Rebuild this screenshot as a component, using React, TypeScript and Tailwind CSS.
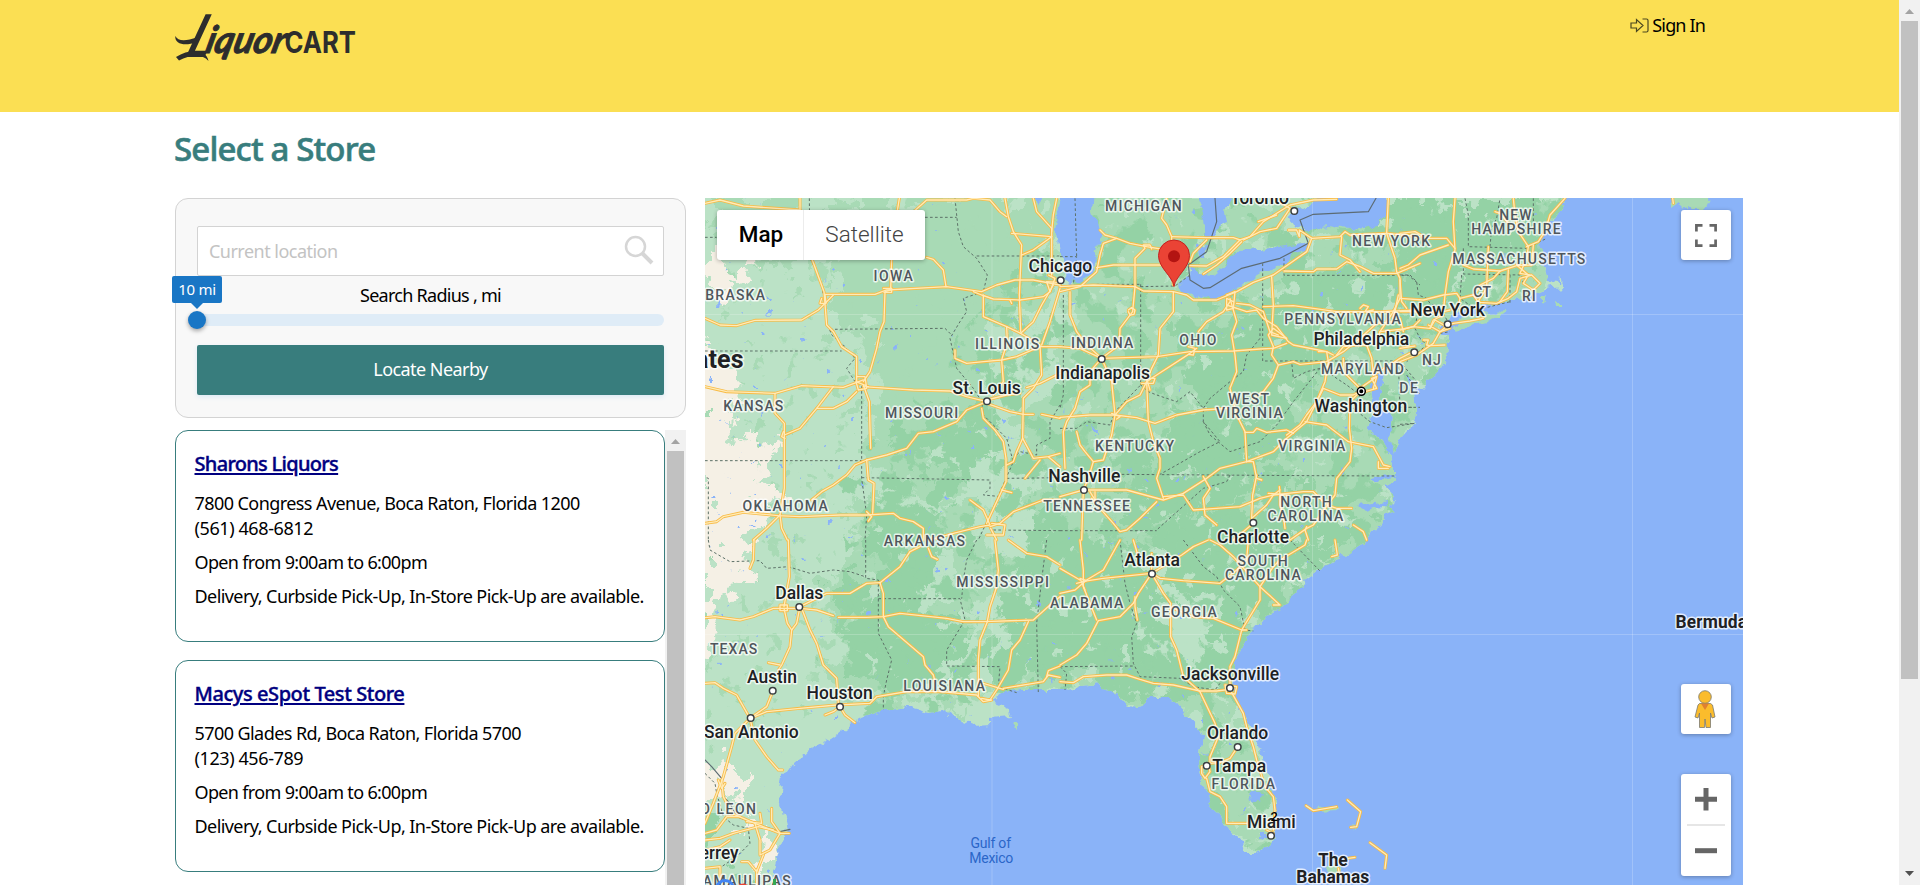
import React from "react";

const TEXT = "font-['Noto_Sans','Open_Sans',sans-serif]";

type Tile = { x: number; y: number; roads: string[]; borders: string[]; frontier?: string[] };

// Map geometry is stored per tile, in triple resolution.
const TILES: Tile[] = [
  {
    x: 700,
    y: 195,
    roads: [
      "15,370 60,390 110,392 165,376 305,375 355,345 400,300",
      "375,298 525,298 560,285 740,275 845,290 890,270 945,255 1000,255 1080,270",
      "15,25 60,15 130,33 300,45",
      "300,10 300,45",
      "335,190 350,230 372,290 380,390 400,410 425,455 470,485 470,560",
      "598,10 590,60 575,190 572,285 555,290 552,380 540,410 530,460 510,530 490,560",
      "630,60 680,15 800,15 820,10 870,15 900,50 920,65",
      "915,10 925,65 940,110 965,150 958,300 962,410",
      "935,115 1055,125",
      "965,180 1000,165 1055,125",
      "1000,10 1010,50 1055,100 1055,240",
      "1070,10 1060,60 1055,110",
      "680,187 700,193 730,225 738,275",
      "820,290 845,300 880,312 960,315 1030,305 1050,290",
      "850,300 850,365 920,395 962,415 1000,380 1025,330 1060,270",
      "930,315 935,325",
      "920,395 922,440 905,495 910,560 880,600",
      "765,465 765,490 800,505 850,500 905,495 950,485 1020,455 1080,455",
      "962,415 1020,450 1025,540 1000,580 970,610 968,730",
      "1080,280 1050,380 1025,450",
      "15,575 80,590 225,595 305,572 430,577 490,555",
      "225,595 225,655 253,685 253,880 240,960",
      "253,720 300,700 350,640 400,575",
      "350,640 400,640 440,620 470,590",
      "490,575 640,585 750,588 800,605 860,620",
      "860,615 920,600 960,595",
      "980,578 1020,565 1080,535",
      "490,570 508,620 510,700 512,760",
      "860,620 800,645 770,680 700,710 655,715 620,760 560,780 500,795 465,810 440,840 400,870 365,890 335,915",
      "500,795 505,855 522,865 518,955",
      "15,985 50,980 70,965 130,952 235,962 300,965 420,960 500,960 580,955 600,970 640,980 670,1000 670,1035",
      "240,960 200,1000 160,1035",
      "240,960 245,1000 262,1035",
      "860,625 930,650 970,658 1000,658",
      "1025,658 1080,670",
      "845,640 850,670 885,705 910,740 918,790 918,860 890,920 860,985",
      "905,885 935,893",
      "968,730 950,770 940,800 920,810",
      "968,730 1000,790 1045,785 1080,775",
      "1020,795 975,850",
      "1045,785 1080,815",
      "810,915 850,945 870,990 840,995 760,1015 690,1035",
      "870,995 900,985 940,950 1030,915 1080,915",
      "872,1000 890,1035",
      "860,1020 910,1020 915,990 875,985",
      "470,545 495,545 500,580 475,585 468,560 505,575",
      "375,298 378,325 360,325 365,310",
      "550,280 575,280 575,292 552,292",
      "250,710 245,725 255,730",
      "500,950 515,965 505,978",
      "1045,240 1065,250 1050,290 1040,260 1075,262",
    ],
    borders: [
      "328,10 330,190 350,230 365,270 375,330 380,380 395,420 430,450 465,490 440,520 465,560 485,575 485,850 500,960 495,1035",
      "15,127 50,127",
      "15,468 425,468",
      "390,403 735,400 755,420",
      "765,10 770,60 775,110 790,155 830,190 862,240 850,290 790,310 800,350 780,380 750,430 770,520 820,580 845,620 850,660 920,730 940,800 905,880 870,960 835,1035",
      "675,67 770,67",
      "830,183 1080,183",
      "15,797 485,797",
      "20,848 25,850 25,1035",
      "485,848 870,855 870,880 850,900 905,905",
      "920,850 1080,848",
      "940,790 960,770 1010,780 1010,750 1050,730 1050,680 1080,630",
      "880,1005 1080,1007",
    ],
  },
  {
    x: 1060,
    y: 195,
    roads: [
      "120,105 135,120 170,130 210,145 260,155 320,165",
      "170,130 130,145 120,180 110,230 60,275 0,290",
      "320,10 305,70 320,90 335,125 335,200 340,270",
      "335,125 440,128 520,128 540,135 570,125 610,80 690,30 760,15 830,13",
      "640,10 690,40 650,100 600,110 550,135",
      "540,135 510,165 490,185 440,213 390,212",
      "430,237 470,210 510,175 545,140",
      "390,200 400,175 440,135",
      "110,218 160,210 300,210 340,205",
      "225,275 225,190 255,160 250,150 270,150 275,162",
      "0,275 100,270 225,275 250,288 340,290 380,300 400,315 470,315 530,290 580,262 640,240 740,170 755,130",
      "755,130 840,125 855,110 870,120 980,115 1080,125",
      "595,80 650,60",
      "685,105 710,105 718,125 718,105 755,130",
      "985,10 980,115 1005,190 1010,230 1020,250 1020,310 1000,350",
      "845,125 840,180 870,195 900,230",
      "672,228 760,230 770,222 830,222 860,200 900,215 940,235 1010,235 1080,205",
      "340,290 340,350 300,400 295,480 275,520 260,560 265,680 280,740 300,790 300,820 290,850 310,910",
      "225,275 218,350 180,400 178,450 125,490",
      "205,345 215,338 225,345 222,358 210,360 205,350",
      "30,290 30,360 50,410 80,450 125,490",
      "0,455 60,460 125,490 290,485 390,470 520,468 600,462 640,460 680,445",
      "125,490 155,560 165,660 155,720 130,795 100,800",
      "100,800 85,850 70,885",
      "125,490 90,530 90,570 60,590 45,640 20,680 10,710 15,820",
      "0,667 90,660 165,660 230,668 285,685 350,660 430,645 500,640",
      "165,660 200,620 240,600 260,560 290,540 390,475 410,460",
      "415,410 440,380 490,350 510,320",
      "510,310 520,345 530,380 515,420 525,480 530,530 510,580 530,660 555,710 560,800",
      "500,300 525,290 520,340 500,345 500,310 520,320",
      "500,330 560,350 590,345 610,370 650,395 685,440 700,450 760,462 800,470 820,480",
      "530,325 570,330 610,350 630,410 655,420",
      "610,335 700,332 760,340 830,350 890,350 960,350 1080,345",
      "635,245 640,330 635,420 680,430 640,400 625,420 640,455",
      "640,455 635,480 655,510 640,550 610,590 580,610",
      "655,510 700,500 720,508 800,500 850,470 900,430 950,385 1000,380",
      "960,410 1030,402 1060,395 1080,375",
      "775,470 800,470 805,500 795,560 770,620 740,660 720,690 680,720",
      "830,480 850,455 890,450 920,450 935,490 940,540",
      "850,490 850,530 900,580 950,545",
      "940,540 990,510 1020,490 1060,470",
      "790,580 840,600 880,600 900,590",
      "900,590 870,620 868,700 875,760 870,800 830,850 825,900 810,920",
      "915,590 950,580 935,550 950,545 940,580",
      "735,680 800,690 865,740 940,755 970,810 990,815",
      "955,800 955,820 985,820",
      "560,800 480,820 440,850 370,895 310,915 200,885 120,885 70,885 0,905",
      "560,800 600,785 640,770 680,730 740,680 790,580",
      "555,712 580,712 590,700 620,712 680,705 700,715",
      "560,800 580,800 590,850 605,855",
      "590,840 578,900 575,970",
      "430,845 450,880 430,910 435,960 470,990",
      "310,905 370,900 400,945 470,940 540,935 600,910 640,900 730,890 760,890 800,930 830,940 875,940",
      "575,970 620,930 640,900 660,885",
      "658,875 660,900 660,930 670,960 675,1000",
      "625,895 680,900",
      "580,985 520,1035",
      "70,885 65,1035",
      "90,890 120,940 160,985 180,1010 200,1005 240,970 290,920",
      "105,890 105,920 95,910",
      "50,710 60,750 75,770 100,800",
      "810,920 760,990 740,1000 690,1035",
      "880,990 910,1010 920,1035",
      "740,995 735,1005 745,1035",
      "245,565 280,565 285,550 260,550 270,585",
      "155,655 180,665 170,672",
      "385,455 405,460 400,480 385,478",
      "900,340 910,330 925,335 915,350 940,345",
      "0,270 0,250",
      "1000,350 960,410 955,430",
      "1005,350 1015,300 1000,370",
    ],
    borders: [
      "242,268 242,570 265,590 290,600 350,620 390,590 430,640 430,680 480,740 420,770 350,810 300,838",
      "110,268 242,268",
      "242,275 345,273 390,240",
      "0,185 50,185 40,268",
      "45,10 50,185",
      "10,300 10,600 0,640",
      "608,205 608,498 1020,498 1045,530 1070,560",
      "672,190 672,241 1045,241 1080,270",
      "600,400 600,430 560,480 550,530 510,560 450,610 430,640",
      "430,680 450,720 510,770 600,740 650,690 700,620 780,520",
      "780,520 740,530 700,550 695,500",
      "170,838 740,842 1010,843",
      "510,840 500,860 430,880 340,960 290,1005",
      "0,1007 290,1007",
      "0,700 50,700 80,680 150,690 165,650 242,570",
      "800,530 860,570 900,600 880,640 930,680 980,698 1065,685",
      "1015,500 1020,637 1060,637",
    ],
    frontier: [
      "465,10 470,80 440,170 385,210 390,255 430,280 450,278 545,220 660,190 745,145 720,75 760,58 925,50 948,10",
    ],
  },
  {
    x: 1400,
    y: 195,
    roads: [
      "165,10 160,80 165,165 145,230 135,300 130,350",
      "0,115 45,110 80,130 140,130 165,160",
      "0,220 25,210 60,180 145,150",
      "495,10 450,60 435,110 415,140 380,155",
      "340,10 345,60 355,110 385,155 380,190 360,235 390,240",
      "285,50 300,55 330,90",
      "265,155 262,225 260,280 240,310 235,320",
      "190,210 220,222 262,225 300,228 350,212 395,210 400,150",
      "300,228 280,250 240,270 230,290",
      "180,310 220,300 235,322 290,325 325,310 350,290 360,250 395,240 420,265 400,285 370,265 385,240 350,210",
      "325,225 322,290 300,320",
      "0,310 70,315 130,300 170,295 180,310 175,340",
      "0,350 60,350 130,350 150,345",
      "0,405 40,395 90,400 100,375 130,360",
      "145,390 160,385 210,378 250,370",
      "145,390 120,410 100,445 50,480 0,500",
      "45,453 0,460",
      "70,435 85,435 80,450 90,452 135,450",
      "0,255 5,320 20,340",
      "90,400 105,375 150,400 120,410 85,390",
      "818,10 820,25",
      "0,370 10,410",
    ],
    borders: [
      "195,10 205,60 205,155 380,160 420,140 440,130",
      "270,155 275,100 290,70 300,10",
      "400,10 400,100",
      "190,160 190,237 365,240 370,270",
      "330,240 330,330",
      "0,240 30,240 50,260 55,300 80,310 90,325 120,340 150,390",
      "50,370 45,400 60,430 80,450 20,500",
      "185,240 180,310 230,345 330,320",
      "0,688 45,685",
      "25,637 60,637",
      "20,540 60,600",
      "120,415 150,410",
    ],
  },
  {
    x: 700,
    y: 540,
    roads: [
      "15,233 45,230 120,240 160,230 220,205 300,205 350,210 400,227",
      "415,232 500,232 550,230 600,220 740,235 790,245 850,245 1000,240 1050,195 1080,170",
      "162,0 160,60 150,85",
      "265,0 268,110 252,200",
      "300,200 290,250 275,270 270,320 245,375 235,390",
      "252,205 262,250 275,270",
      "205,368 240,375",
      "305,205 330,270 350,310 370,375 410,415 415,490",
      "300,200 380,160 450,160 500,130 540,128",
      "540,128 600,80 630,35 660,20",
      "685,25 695,50 712,58",
      "540,128 550,160 550,230 565,260 600,290 670,350 675,375 700,405 705,425",
      "885,0 895,90 890,140 870,200 862,245 840,300 835,360 835,470",
      "925,0 980,40 1040,50 1080,75",
      "985,245 960,300 935,330 925,390 890,450 870,480 845,475",
      "910,445 1000,430 1030,425 1045,405 1080,412",
      "1080,378 1045,392 1040,410",
      "150,535 200,515 300,505 410,495 510,490 530,470 560,465 620,455 720,455",
      "850,430 910,448",
      "720,455 830,465 850,485 875,480",
      "218,455 200,500 150,535",
      "15,430 45,428 70,445 110,465 130,500 150,535 105,580 95,620 70,710 40,790 15,850",
      "150,535 165,600 200,650 235,690 248,690",
      "420,500 435,525 465,548",
      "375,525 400,515 420,500",
      "65,720 70,770 95,820 165,850 240,880 268,880",
      "165,850 180,900 180,945 210,930 240,880",
      "215,805 215,845 240,880",
      "180,820 185,850 140,845",
      "15,900 60,895 100,880 175,860 220,870",
      "15,880 50,870 80,830 120,830",
      "125,965 145,965 170,995 190,945",
      "170,990 170,1035",
      "15,985 60,980 60,1020",
      "20,930 60,920 90,900",
      "240,195 262,195 262,212 240,212 240,195",
      "55,720 65,745 75,730",
    ],
    borders: [
      "25,0 30,30 90,65 180,62 200,85 265,80 330,100 400,90 450,95 495,110",
      "497,0 497,115 535,120 535,280 575,360 560,420 550,470 550,510",
      "535,176 780,176 795,240 740,330 740,378 900,380 895,440 950,458",
      "830,0 800,60 790,120 785,176",
      "1040,0 1025,120 1010,250 1015,460",
      "15,700 45,730 50,760 70,830 100,855 145,865 150,910 110,950 50,990",
    ],
    frontier: ["15,660 35,680 65,715 70,770 90,790 110,830 170,852 240,875 270,868"],
  },
  {
    x: 1060,
    y: 540,
    roads: [
      "60,0 70,90 70,140 110,240",
      "0,160 45,150 80,120 130,90 180,0",
      "0,85 60,120",
      "50,130 80,122 60,115 75,150",
      "65,125 130,115 275,100",
      "275,100 365,45 400,20 445,0",
      "220,0 235,50",
      "275,40 275,100",
      "275,100 300,115 370,122 480,130 530,90 560,60 565,0",
      "275,100 235,160 220,190 180,230 115,242 80,310 50,345 0,375",
      "225,170 225,200 232,240",
      "275,100 310,160 332,190 332,290 350,330 370,410 420,455 465,550 475,590 450,650 450,670",
      "340,205 400,230 460,235 545,270 560,270",
      "450,0 480,15 520,50 600,140 660,195 640,195",
      "740,0 735,15 660,60 640,80 600,140 600,180 545,270 525,350 510,380 510,445",
      "825,0 832,45 815,50",
      "0,425 40,428 70,410 140,405 200,405 240,418 280,430 340,435 420,453 470,453 510,448",
      "510,448 550,520 560,560 580,620 590,660 615,740 640,770 645,810 640,870",
      "530,625 510,655 480,668 450,670 425,680 425,700 435,715 450,695 445,670",
      "440,715 450,755 480,770 500,800 500,850 560,850",
      "738,797 760,812 830,800",
      "862,780 902,815 890,860 872,862",
      "930,908 980,945 975,985",
      "865,955 885,952",
      "835,985 840,1010",
      "620,870 640,880 625,885",
      "495,435 530,440 525,462 500,460 495,435",
    ],
    borders: [
      "180,0 195,130 210,190 230,250 215,290 220,370 240,410 360,415 400,440 465,450 480,430",
      "0,380 225,378",
      "370,0 430,80 470,110 490,150 540,200 555,270 580,273",
      "690,0 780,93",
      "0,380 20,400 15,450",
    ],
  },
];

const LAND =
  "695,190 1566,190 1562,205 1552,220 1545,228 1540,242 1542,258 1545,272 1547,283 1560,284 1561,275 1564,287 1552,288 1542,290 1535,293 1520,300 1500,302 1480,307 1460,311 1448,318 1440,333 1448,338 1447,355 1442,368 1428,383 1422,390 1414,383 1405,373 1408,382 1415,395 1417,408 1415,423 1400,440 1393,453 1390,438 1394,420 1384,408 1378,395 1384,377 1377,372 1372,384 1370,397 1374,412 1367,428 1383,440 1388,452 1393,463 1393,482 1385,486 1398,500 1388,506 1396,510 1384,515 1380,526 1373,532 1367,541 1350,552 1337,560 1320,570 1302,583 1298,593 1282,607 1262,619 1250,632 1242,647 1235,667 1232,687 1240,707 1250,727 1260,747 1267,773 1277,800 1277,823 1270,847 1257,853 1245,853 1243,842 1230,833 1220,817 1208,797 1202,780 1198,763 1203,740 1198,727 1183,713 1170,697 1150,697 1141,706 1128,708 1117,695 1100,685 1080,687 1060,690 1047,690 1020,690 1003,693 990,700 1007,707 1012,716 990,718 990,724 973,725 960,720 945,710 930,713 907,707 883,710 860,718 843,730 830,740 807,752 793,763 783,777 780,800 788,830 778,853 773,873 773,895 695,895";

const WATER = [
  "1062,190 1058,215 1055,230 1059,252 1062,272 1070,284 1085,279 1092,268 1098,252 1102,235 1096,222 1092,210 1095,190",
  "1033,190 1036,208 1043,190",
  "1195,190 1202,207 1204,220 1206,238 1213,237 1220,225 1227,222 1225,210 1237,190",
  "1198,245 1208,244 1206,256 1199,258",
  "1307,242 1285,246 1258,250 1237,251 1225,265 1213,274 1200,273 1190,264 1188,276 1179,286 1190,295 1205,299 1222,295 1240,287 1263,273 1285,262 1297,252 1309,247",
  "1288,218 1299,208 1312,202 1325,190 1386,190 1388,210 1379,224 1350,229 1328,225 1308,230 1293,226",
  "1248,795 1256,791 1260,797 1253,803 1247,799",
  "1372,478 1392,474 1392,478 1376,482",
  "1360,506 1388,500 1388,504 1366,511",
];

const ISLANDS = [
  "1452,326 1470,315 1490,312 1508,311 1500,317 1487,322 1470,326 1456,330",
  "1555,302 1563,302 1563,304 1556,304",
  "1541,296 1548,296 1546,301 1541,300",
  "1672,190 1673,208 1680,203 1690,210 1704,210 1714,190",
  "1316,808 1336,806 1338,810 1318,811",
  "1352,823 1357,829 1354,831",
  "1326,866 1340,866 1342,876 1330,877",
  "1015,722 1018,722 1018,731 1014,727",
];

const MID = [
  "860,198 1062,198 1058,215 1055,290 1000,330 970,400 900,390 880,340 830,300 820,230",
  "880,330 1000,320 980,400 990,470 930,500 880,470 860,420",
  "705,198 800,198 820,240 790,270 720,240",
  "1090,198 1205,198 1210,260 1180,290 1170,500 1040,540 1000,460 1060,360 1065,290",
  "1200,260 1400,230 1420,300 1410,450 1380,560 1290,600 1240,660 1240,720 1280,850 1200,830 1190,740 1100,690 990,700 880,710 840,690 830,600 860,500 1020,500",
  "1300,198 1600,198 1540,320 1440,390 1400,340",
  "1230,198 1310,198 1270,245 1215,265",
];

const DARK = [
  "925,430 945,412 985,420 992,445 985,475 955,485 930,465 905,462 890,450",
  "870,505 935,500 950,540 945,590 905,610 890,560 870,550",
  "845,590 880,560 940,580 935,620 990,640 1080,600 1130,560 1180,520 1230,500 1240,560 1200,600 1140,650 1090,680 1010,680 930,690 880,690 840,650",
  "1010,520 1060,500 1080,560 1080,640 1010,650 1000,590",
  "1150,440 1200,400 1225,330 1290,300 1330,330 1300,400 1270,470 1200,510 1140,530 1110,500",
  "1265,290 1320,265 1400,275 1450,230 1450,300 1400,320 1330,340 1290,350 1260,330",
  "1370,198 1545,198 1535,240 1480,300 1440,310 1400,260 1360,230",
  "1180,340 1260,310 1280,380 1230,420 1190,390",
  "1060,560 1150,540 1300,545 1330,555 1260,620 1235,690 1190,710 1110,690 1060,650",
  "1230,490 1330,480 1370,500 1340,550 1280,540",
  "705,820 715,820 720,840 706,845",
  "722,870 760,862 765,885 725,885",
];

const PALE = [
  "1150,620 1200,590 1225,600 1215,660 1180,670 1150,650",
  "1140,560 1200,590 1180,600 1150,590",
  "1190,690 1215,700 1210,720 1190,710",
  "945,540 960,580 940,620 925,560",
  "985,460 1030,450 1040,520 1000,560 975,545",
  "1210,840 1240,845 1270,845 1262,853 1245,853",
  "990,600 1010,560 1015,610 985,680 960,700 950,680",
];

const DRY = [
  "705,245 735,252 745,275 712,290 705,275",
  "700,340 720,350 728,380 738,400 718,420 740,440 770,442 775,462 750,470 770,485 790,495 760,515 745,530 760,560 745,570 725,590 720,640 700,665",
  "700,750 722,765 735,765 740,790 758,785 752,805 728,805 720,790 700,800",
  "757,825 775,835 775,880 758,870",
  "728,815 745,818 745,826 730,826",
];

type Label = [string, number, number, number];

const STATES: Label[] = [
  ["MICHIGAN", 1105.7, 1181.7, 210.7],
  ["IOWA", 874.3, 912.7, 281],
  ["BRASKA", 706, 765, 300.3],
  ["KANSAS", 724, 783.3, 411],
  ["MISSOURI", 885.7, 958.3, 418],
  ["ILLINOIS", 975.7, 1039.3, 348.7],
  ["OKLAHOMA", 743.3, 827.7, 511],
  ["ARKANSAS", 884.5, 965, 545.7],
  ["MISSISSIPPI", 957, 1049, 587],
  ["LOUISIANA", 904, 985, 691.3],
  ["TEXAS", 710.7, 757.3, 654.3],
  ["O LEON", 701, 756, 814.3],
  ["AMAULIPAS", 703.5, 790.7, 886],
  ["INDIANA", 1071.7, 1133.3, 348],
  ["OHIO", 1180, 1216.3, 345],
  ["PENNSYLVANIA", 1285, 1400.7, 324.3],
  ["NEW YORK", 1352.7, 1430, 245.7],
  ["MARYLAND", 1321.7, 1404, 374.3],
  ["DE", 1400, 1418, 393],
  ["WEST", 1229, 1269, 404],
  ["VIRGINIA", 1216.7, 1282.7, 418],
  ["KENTUCKY", 1095.7, 1174, 450.7],
  ["VIRGINIA", 1279, 1345.3, 450.7],
  ["TENNESSEE", 1044, 1130, 511.3],
  ["NORTH", 1281, 1331.7, 507.3],
  ["CAROLINA", 1268.3, 1343.3, 521.3],
  ["SOUTH", 1238.3, 1287.7, 566.3],
  ["CAROLINA", 1225.7, 1300.7, 580.3],
  ["ALABAMA", 1050.7, 1123.3, 608],
  ["GEORGIA", 1151.7, 1216.7, 617.3],
  ["FLORIDA", 1212.3, 1275, 788.7],
  ["NEW", 1500, 1531.7, 220],
  ["HAMPSHIRE", 1472, 1560.7, 234],
  ["MASSACHUSETTS", 1453, 1585.3, 264.3],
  ["CT", 1474, 1491, 296.7],
  ["RI", 1522.7, 1535.7, 301],
  ["NJ", 1422.7, 1440.7, 365],
];

const CITIES: Label[] = [
  ["Chicago", 1029.3, 1092.3, 272.3],
  ["Toronto", 1231, 1289, 203.5],
  ["New York", 1411, 1485, 316.3],
  ["Philadelphia", 1314.3, 1409.3, 345],
  ["Washington", 1315.3, 1407.3, 411.7],
  ["Indianapolis", 1056, 1150, 379.3],
  ["St. Louis", 953.3, 1020.7, 393.7],
  ["Nashville", 1049, 1120.3, 482.3],
  ["Charlotte", 1217.7, 1289, 542.5],
  ["Atlanta", 1125, 1180, 566],
  ["Dallas", 776, 823.3, 599],
  ["Austin", 747.7, 797, 682.7],
  ["Houston", 807.3, 872.7, 699.3],
  ["San Antonio", 704.7, 798.7, 737.7],
  ["errey", 700.5, 738.7, 858.7],
  ["Jacksonville", 1182, 1279, 680.3],
  ["Orlando", 1207.7, 1268.3, 739],
  ["Tampa", 1213, 1266.3, 771.7],
  ["Miami", 1247.7, 1295.7, 828],
];

const COUNTRIES: Label[] = [
  ["The", 1319, 1347.7, 865.7],
  ["Bahamas", 1297, 1369.3, 883.3],
  ["Bermuda", 1676.3, 1747, 628],
];

const DOTS = [
  [1060.7, 280.3], [1294.3, 211], [1447.7, 324.3], [1414.3, 352.3], [1101.7, 359], [987, 401.3], [1084, 490],
  [1253.3, 522.7], [1152, 573.7], [799.3, 607], [772.7, 690.7], [840, 706.7], [750.7, 718], [1230, 688],
  [1237.7, 747], [1206.7, 765.7], [1271, 835.7],
];

function MapText({ items, className }: { items: Label[]; className: string }) {
  return (
    <g className={className}>
      {items.map(([t, a, b, y]) => (
        <text key={t + a} x={a - 0.7} y={y} textLength={b - a + 0.7}>
          {t}
        </text>
      ))}
    </g>
  );
}

function Shapes({ list, className, filter }: { list: string[]; className: string; filter?: string }) {
  return (
    <g className={className} filter={filter}>
      {list.map((p) => (
        <polygon key={p} points={p} />
      ))}
    </g>
  );
}

function Lines({ pick, className }: { pick: (t: Tile) => string[]; className: string }) {
  return (
    <g className={className} fill="none" strokeLinejoin="round" strokeLinecap="round">
      {TILES.map((t) => (
        <g key={t.x + "-" + t.y} transform={`translate(${t.x} ${t.y}) scale(0.33333)`}>
          {pick(t).map((p, i) => (
            <polyline key={i} points={p} />
          ))}
        </g>
      ))}
    </g>
  );
}

function MapCanvas() {
  return (
    <svg className="block h-full w-full" viewBox="705 198 1038 687">
      <defs>
        <clipPath id="land">
          <polygon points={LAND} />
        </clipPath>
        <filter id="coast" filterUnits="userSpaceOnUse" x="690" y="180" width="1070" height="720">
          <feTurbulence type="fractalNoise" baseFrequency="0.09" numOctaves="3" seed="4" />
          <feDisplacementMap in="SourceGraphic" scale="11" xChannelSelector="R" yChannelSelector="G" />
        </filter>
        <filter id="rough" filterUnits="userSpaceOnUse" x="690" y="180" width="1070" height="720">
          <feTurbulence type="fractalNoise" baseFrequency="0.035" numOctaves="4" seed="9" />
          <feDisplacementMap in="SourceGraphic" scale="75" xChannelSelector="R" yChannelSelector="G" />
        </filter>
        <filter id="patches" filterUnits="userSpaceOnUse" x="690" y="180" width="1070" height="720" colorInterpolationFilters="sRGB">
          <feTurbulence type="fractalNoise" baseFrequency="0.04" numOctaves="4" seed="21" />
          <feColorMatrix values="0 0 0 0 0  0 0 0 0 0  0 0 0 0 0  22 0 0 0 -12" result="mask" />
          <feComposite in="SourceGraphic" in2="mask" operator="in" />
        </filter>
        <filter id="flecks" filterUnits="userSpaceOnUse" x="690" y="180" width="1070" height="720" colorInterpolationFilters="sRGB">
          <feTurbulence type="fractalNoise" baseFrequency="0.06" numOctaves="3" seed="33" />
          <feColorMatrix values="0 0 0 0 0  0 0 0 0 0  0 0 0 0 0  0 26 0 0 -16.9" result="mask" />
          <feComposite in="SourceGraphic" in2="mask" operator="in" />
        </filter>
        <filter id="ponds" filterUnits="userSpaceOnUse" x="690" y="180" width="1070" height="720" colorInterpolationFilters="sRGB">
          <feTurbulence type="fractalNoise" baseFrequency="0.12" numOctaves="2" seed="7" />
          <feColorMatrix values="0 0 0 0 0  0 0 0 0 0  0 0 0 0 0  0 0 26 0 -20.2" result="mask" />
          <feComposite in="SourceGraphic" in2="mask" operator="in" />
        </filter>
      </defs>
      <rect x="700" y="190" width="1050" height="700" className="fill-[#8ab3f8]" />
      <g filter="url(#coast)">
        <polygon points={LAND} className="fill-[#bbe2c6]" />
        <g clipPath="url(#land)">
          <Shapes list={MID} className="fill-[#a8dab5]" filter="url(#rough)" />
          <Shapes list={DARK} className="fill-[#94d2a5]" filter="url(#rough)" />
          <Shapes list={PALE} className="fill-[#bbe2c6]" filter="url(#rough)" />
          <Shapes list={["705,190 1100,190 1000,500 850,700 705,760"]} className="fill-[#a8dab5]" filter="url(#flecks)" />
          <Shapes list={["1030,190 1580,190 1400,560 1280,850 1190,850 1180,700 860,720 840,480 1030,420"]} className="fill-[#bbe2c6]" filter="url(#flecks)" />
          <Shapes list={["1080,190 1580,190 1400,560 1280,850 1190,850 1180,700 860,720 840,480"]} className="fill-[#94d2a5]" filter="url(#patches)" />
          <Shapes list={DRY} className="fill-[#f5f0e5]" filter="url(#rough)" />
          <Shapes list={["705,190 1580,190 1400,560 1280,850 705,885"]} className="fill-[#8ab3f8]" filter="url(#ponds)" />
        </g>
        <Shapes list={WATER} className="fill-[#8ab3f8]" />
        <Shapes list={ISLANDS} className="fill-[#a8dab5]" />
      </g>
      <path d="M992 190V890M1312.500 190V890M1632.500 190V890M700 314.500H1750M700 634.500H1750" className="stroke-white/20" fill="none" />
      <Lines pick={(t) => t.borders} className="stroke-[#5c7067] stroke-[3px] [stroke-dasharray:8_7] [stroke-linecap:butt]" />
      <Lines pick={(t) => t.frontier ?? []} className="stroke-[#5c6b73] stroke-[3.500px]" />
      <Lines pick={(t) => t.roads} className="stroke-[#f8bb45] stroke-[9px]" />
      <Lines pick={(t) => t.roads} className="stroke-[#ffebb8] stroke-[4px]" />
      <MapText
        items={STATES}
        className="fill-[#4f565c] stroke-white/75 stroke-[3px] font-['Roboto',sans-serif] text-[14px] font-medium [paint-order:stroke] [stroke-linejoin:round]"
      />
      <g className="fill-white stroke-[#3c4043] stroke-[1.500px]">
        {DOTS.map(([x, y]) => (
          <circle key={x} cx={x} cy={y} r="3.300" />
        ))}
        <circle cx="1361.300" cy="391.300" r="4" className="stroke-black" />
        <circle cx="1361.300" cy="391.300" r="1.300" className="fill-black stroke-black" />
      </g>
      <MapText
        items={CITIES}
        className="fill-[#202124] stroke-white/75 stroke-[3px] font-['Roboto',sans-serif] text-[17.500px] font-medium [paint-order:stroke] [stroke-linejoin:round]"
      />
      <MapText
        items={COUNTRIES}
        className="fill-[#202124] stroke-white/75 stroke-[3px] font-['Roboto',sans-serif] text-[17.500px] font-bold [paint-order:stroke] [stroke-linejoin:round]"
      />
      <text x="695" y="367.700" textLength="48.500" className="fill-[#202124] stroke-white/75 stroke-[3px] font-['Roboto',sans-serif] text-[25px] font-bold [paint-order:stroke]">
        ates
      </text>
      <g className="fill-[#2a66c8] font-['Roboto',sans-serif] text-[14px]">
        <text x="970.500" y="848" textLength="40.500">Gulf of</text>
        <text x="969.300" y="862.700" textLength="44">Mexico</text>
      </g>
      <text x="1270.500" y="820.700" className="fill-black font-['Roboto',sans-serif] text-[13px] font-medium">2</text>
      <g fill="none" strokeWidth="3">
        <circle cx="725" cy="889" r="8.500" className="stroke-[#4285f4]" />
        <circle cx="743" cy="892" r="7" className="stroke-[#ea4335]" />
        <path d="M774.500 879V890" className="stroke-[#34a853]" />
      </g>
      <path
        d="M1174 286.500C1172.500 276 1158.500 268 1158.500 255.500A15.500 15.500 0 0 1 1189.500 255.500C1189.500 268 1175.500 276 1174 286.500Z"
        className="fill-[#ea4335] stroke-[#c5221f]"
      />
      <circle cx="1174" cy="256.300" r="6" className="fill-[#b31412]" />
    </svg>
  );
}

function Arrow({ down = false, dark = false }: { down?: boolean; dark?: boolean }) {
  return (
    <svg viewBox="0 0 9 5" className={`h-[5px] w-[9px] ${down ? "rotate-180" : ""} ${dark ? "fill-[#505050]" : "fill-[#a3a3a3]"}`}>
      <path d="M4.500 0L9 5H0Z" />
    </svg>
  );
}

function Logo() {
  return (
    <svg viewBox="172 8 190 66" className="h-[66px] w-[190px] overflow-visible fill-[#2d2d2d]" role="img" aria-label="LiquorCART">
      <g transform="translate(184 57) skewX(-20)">
        <text x="0" y="0" className="font-['Lato',sans-serif] text-[59px] font-bold italic" textLength="23" lengthAdjust="spacingAndGlyphs">
          L
        </text>
      </g>
      <g transform="translate(204 53) skewX(-14)">
        <text
          x="0"
          y="0"
          className="stroke-[#2d2d2d] stroke-[1px] font-['Lato',sans-serif] text-[38px] font-bold italic"
          textLength="79"
          lengthAdjust="spacingAndGlyphs"
        >
          iquor
        </text>
      </g>
      <path d="M175.300 36C178 41.500 186 41 197 37.500L196 42.500C185 46 174.500 44.500 175.300 36Z" />
      <path d="M176 57C189 49 206 48 208.500 61C202 53.500 190 55 179 60.500Z" />
      <text x="284.500" y="53.300" textLength="71.500" lengthAdjust="spacingAndGlyphs" className="font-['Inter',sans-serif] text-[30px] font-bold">
        CART
      </text>
    </svg>
  );
}

type Store = { name: string; address: string; phone: string; spacing: string };

const STORES: Store[] = [
  { name: "Sharons Liquors", address: "7800 Congress Avenue, Boca Raton, Florida 1200", phone: "(561) 468-6812", spacing: "tracking-[-0.7px]" },
  { name: "Macys eSpot Test Store", address: "5700 Glades Rd, Boca Raton, Florida 5700", phone: "(123) 456-789", spacing: "tracking-[-0.43px]" },
];

function StoreCard({ store }: { store: Store }) {
  return (
    <article className="h-[212px] w-[490px] shrink-0 rounded-[13px] border border-[#387d7d] bg-white pt-[18px] pl-[18.5px] whitespace-nowrap">
      <h2
        className={`text-[20px] leading-[30px] font-medium text-[#000080] underline decoration-2 underline-offset-[2px] [-webkit-text-stroke:0.4px_#000080] ${store.spacing}`}
      >
        {store.name}
      </h2>
      <p className="mt-[12px] text-[18px] leading-[25px] tracking-[-0.57px]">
        {store.address}
        <br />
        <span className="tracking-[-0.4px]">{store.phone}</span>
      </p>
      <p className="mt-[9px] text-[18px] leading-[25px] tracking-[-0.66px]">Open from 9:00am to 6:00pm</p>
      <p className="mt-[9px] text-[18px] leading-[25px] tracking-[-0.57px]">Delivery, Curbside Pick-Up, In-Store Pick-Up are available.</p>
    </article>
  );
}

function SearchPanel() {
  return (
    <section className="flex h-[220px] flex-col rounded-[13px] border border-[#d3d3d3] bg-[#f8f8f8] px-[21px] pt-[27px]">
      <div className="flex h-[50px] shrink-0 items-center justify-between rounded-[2px] border border-[#d3d3d3] bg-white pr-[9px] pl-[11px]">
        <span className="text-[18px] tracking-[-0.52px] text-[#c3c3c3]">Current location</span>
        <svg viewBox="0 0 30 30" className="mb-[2px] h-[30px] w-[30px] fill-none stroke-[#d6d6d6]">
          <circle cx="11.500" cy="11.500" r="9.500" strokeWidth="2.500" />
          <path d="M18 18L28 28" strokeWidth="4" />
        </svg>
      </div>
      <p className="mt-[7px] text-center text-[18px] leading-[25px] tracking-[-0.73px]">Search Radius , mi</p>
      <div className="relative mt-[6px] h-[12px] shrink-0 rounded-full bg-[#dfecf7]">
        <div className="absolute -top-[3px] -left-[9px] h-[18px] w-[18px] rounded-full bg-[#1976c5] shadow-[0_2px_4px_rgba(0,0,0,0.35)]" />
        <div className="absolute -top-[38px] -left-[25px] flex h-[27px] w-[50px] items-center justify-center rounded-[2px] bg-[#1976c5] text-[15px] tracking-[-0.3px] text-white">
          10 mi
        </div>
        <svg viewBox="0 0 12 6" className="absolute -top-[11px] -left-[6px] h-[6px] w-[12px] fill-[#1976c5]">
          <path d="M0 0H12L6 6Z" />
        </svg>
      </div>
      <button className="mt-[19px] h-[50px] shrink-0 rounded-[2px] bg-[#387d7d] pb-[2px] text-[18px] tracking-[-0.55px] text-white shadow-[0_2px_5px_#dceaf5]">
        Locate Nearby
      </button>
    </section>
  );
}

function MapPanel() {
  return (
    <section className="relative h-[687px] w-[1038px] shrink-0 overflow-hidden">
      <MapCanvas />
      <div className="absolute top-[12px] left-[12px] flex h-[50px] rounded-[3px] bg-white font-['Roboto',sans-serif] text-[22.500px] shadow-[0_1px_4px_rgba(0,0,0,0.3)]">
        <div className="flex w-[87px] items-center justify-center border-r border-[#ececec] pl-[2px] font-medium text-black">Map</div>
        <div className="flex w-[121px] items-center justify-center font-light text-[#444]">Satellite</div>
      </div>
      <div className="absolute top-[12px] right-[12px] flex h-[50px] w-[50px] items-center justify-center rounded-[3px] bg-white shadow-[0_1px_4px_rgba(0,0,0,0.3)]">
        <svg viewBox="0 0 22 23" className="h-[23px] w-[22px] fill-none stroke-[#666] stroke-[2.700px]">
          <path d="M1.400 7.500V1.400H7.500M14.500 1.400H20.600V7.500M20.600 15.500V21.600H14.500M7.500 21.600H1.400V15.500" />
        </svg>
      </div>
      <div className="absolute top-[486px] right-[12px] flex h-[50px] w-[50px] items-center justify-center rounded-[3px] bg-white shadow-[0_1px_4px_rgba(0,0,0,0.3)]">
        <svg viewBox="0 0 22 38" className="mr-[2px] h-[38px] w-[22px] fill-[#fbbc2c] stroke-[#7a7a72] stroke-[0.800px]">
          <path d="M5.500 13.500H16.500L18.500 15L21 27L18 28L16.500 23V37.500H12L11 29L10.500 37.500H5.500V23L4 28L1 27L4 15Z" />
          <circle cx="11" cy="7" r="6.300" />
          <path d="M7 13.500H15L11 20Z" className="fill-[#e0812f] stroke-none" />
        </svg>
      </div>
      <div className="absolute top-[576px] right-[12px] flex h-[102px] w-[50px] flex-col items-center rounded-[3px] bg-white shadow-[0_1px_4px_rgba(0,0,0,0.3)]">
        <svg viewBox="0 0 50 50" className="h-[50px] w-[50px] fill-[#666]">
          <path d="M14 22.800H22.500V14H27.500V22.800H36V27.800H27.500V36.500H22.500V27.800H14Z" />
        </svg>
        <div className="h-[2px] w-[38px] bg-[#e6e6e6]" />
        <svg viewBox="0 0 50 50" className="h-[50px] w-[50px] fill-[#666]">
          <path d="M14 22.200H36V27.200H14Z" />
        </svg>
      </div>
    </section>
  );
}

export default function App() {
  return (
    <div className={`flex h-[885px] w-[1920px] overflow-hidden bg-white text-black ${TEXT}`}>
      <div className="flex min-w-0 flex-1 flex-col">
        <header className="flex h-[112px] shrink-0 items-start justify-between bg-[#fbdf53] pt-[8px] pr-[194px] pl-[172px]">
          <Logo />
          <a className="mt-[5px] flex items-center gap-[3px] text-[18px] leading-[25px] tracking-[-0.85px]">
            <svg viewBox="0 0 19 15" className="h-[15px] w-[19px] fill-none stroke-[#4b4720] stroke-[1.200px]">
              <path d="M1 5H6.500V1.500L13 7.500L6.500 13.500V10H1ZM12.500 1H16.500Q18 1 18 2.500V12.500Q18 14 16.500 14H12.500" />
            </svg>
            Sign In
          </a>
        </header>
        <h1 className="mt-[12px] ml-[174px] text-[33px] leading-[50px] font-medium tracking-[-0.84px] text-[#387d7d] [-webkit-text-stroke:0.6px_#387d7d]">
          Select a Store
        </h1>
        <div className="mt-[24px] flex gap-[19px] pl-[175px]">
          <div className="flex w-[511px] shrink-0 flex-col gap-[12px]">
            <SearchPanel />
            <div className="flex h-[455px] justify-between overflow-hidden">
              <div className="flex flex-col gap-[18px]">
                {STORES.map((s) => (
                  <StoreCard key={s.name} store={s} />
                ))}
              </div>
              <div className="flex w-[21px] flex-col items-center bg-[#f1f1f1]">
                <div className="flex h-[21px] shrink-0 items-center pt-[2px]">
                  <Arrow />
                </div>
                <div className="w-[17px] flex-1 bg-[#c1c1c1]" />
              </div>
            </div>
          </div>
          <MapPanel />
        </div>
      </div>
      <div className="flex w-[21px] shrink-0 flex-col items-center bg-[#f1f1f1]">
        <div className="flex h-[21px] items-center pt-[2px]">
          <Arrow />
        </div>
        <div className="h-[658px] w-[17px] bg-[#c1c1c1]" />
        <div className="mt-auto mb-[9px]">
          <Arrow down dark />
        </div>
      </div>
    </div>
  );
}
